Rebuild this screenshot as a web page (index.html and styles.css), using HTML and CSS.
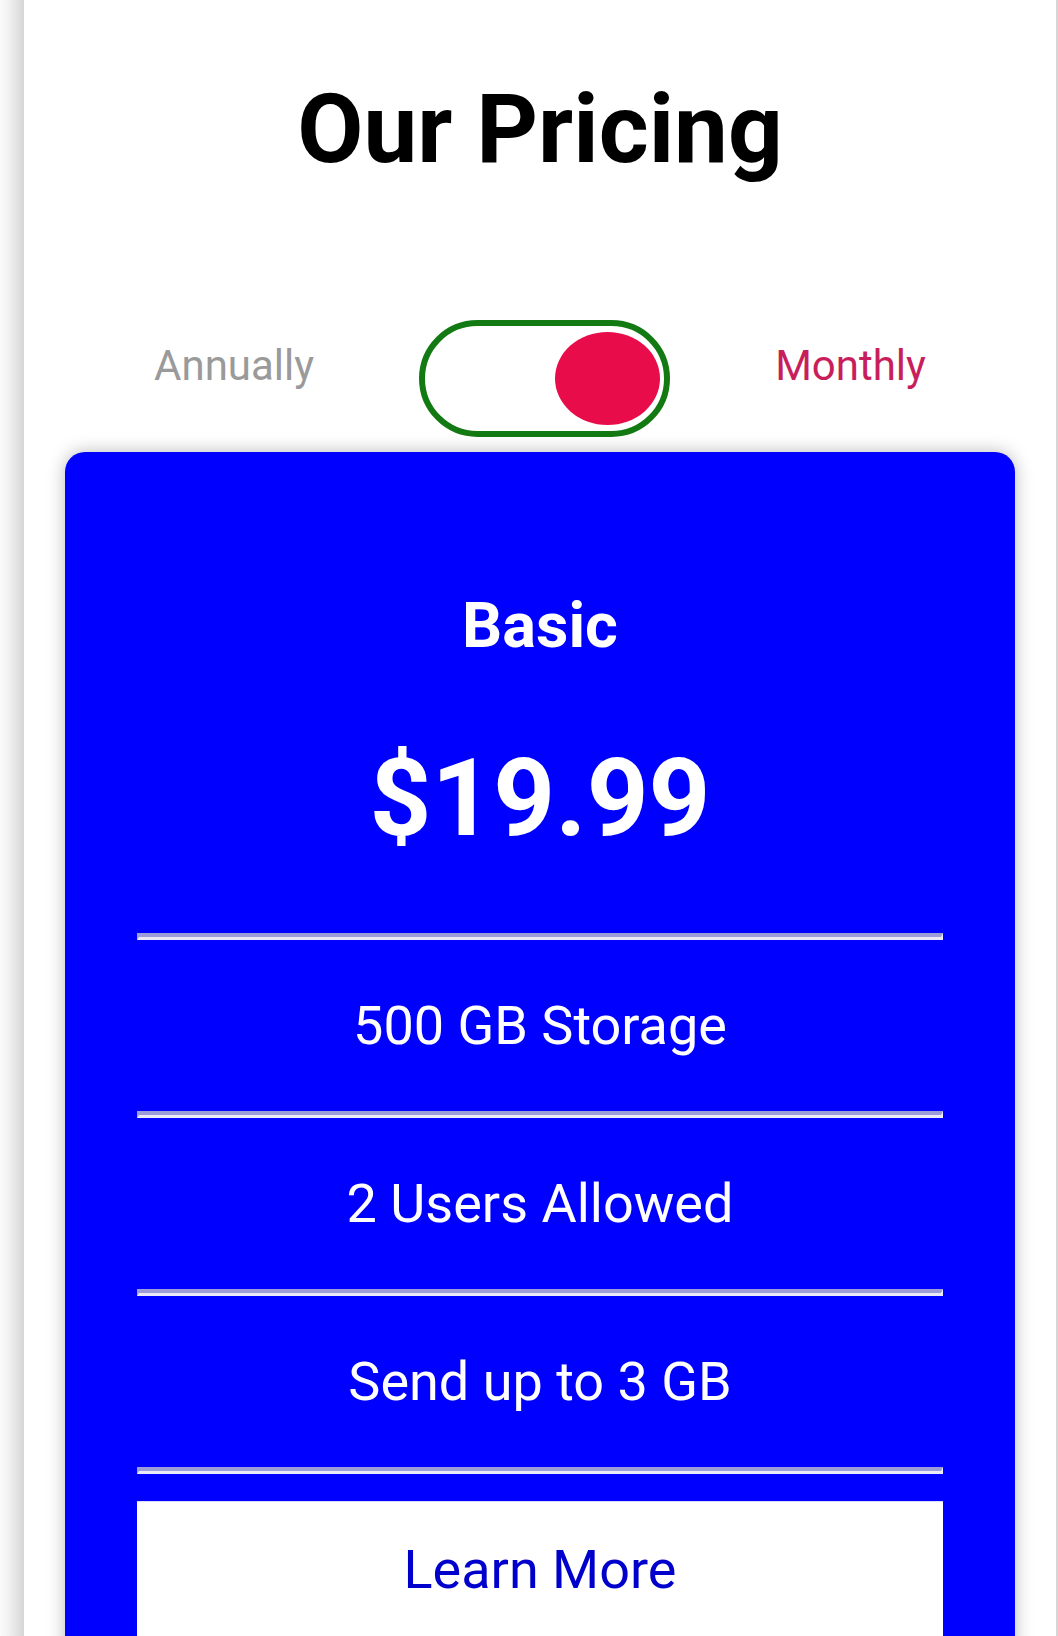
FILE: index.html
```html
<!DOCTYPE html>
<html lang="en">
<head>
<meta charset="utf-8">
<title>Our Pricing</title>
<link rel="stylesheet" href="styles.css">
</head>
<body>
<div class="frame">
  <div class="edge-left"></div>
  <main class="page">
    <h1 class="title">Our Pricing</h1>
    <div class="switch-row">
      <span class="label label-annual">Annually</span>
      <div class="toggle"><span class="knob"></span></div>
      <span class="label label-monthly">Monthly</span>
    </div>
    <section class="card">
      <h2 class="plan">Basic</h2>
      <div class="price">$19.99</div>
      <hr class="rule">
      <div class="feature">500 GB Storage</div>
      <hr class="rule">
      <div class="feature">2 Users Allowed</div>
      <hr class="rule">
      <div class="feature">Send up to 3 GB</div>
      <hr class="rule">
      <button class="btn">Learn More</button>
    </section>
  </main>
  <div class="edge-right"></div>
</div>
</body>
</html>
```

FILE: styles.css
```css
html, body {
  margin: 0;
  padding: 0;
  background: #ffffff;
}

body {
  font-family: Roboto, "Liberation Sans", sans-serif;
  overflow: hidden;
}

.frame {
  display: flex;
  min-height: 1800px;
}

.edge-left {
  width: 24px;
  flex: none;
  background: linear-gradient(to right, #fbfbfb, #f0f0f0 40%, #d6d6d6);
}

.edge-right {
  width: 2px;
  flex: none;
  background: #d6d6d6;
}

.page {
  flex: 1;
  display: flex;
  flex-direction: column;
  align-items: center;
}

.title {
  margin: 81px 0 0;
  font-size: 96px;
  line-height: 96px;
  font-weight: 700;
  color: #000;
}

.switch-row {
  margin-top: 143px;
  display: flex;
  align-items: flex-start;
  justify-content: center;
  gap: 105px;
}

.label {
  margin-top: 21px;
  font-size: 42px;
  line-height: 49px;
}

.label-annual {
  color: #9a9a9a;
}

.label-monthly {
  color: #c81f5c;
}

.toggle {
  box-sizing: border-box;
  width: 251px;
  height: 117px;
  border: 6px solid #137a13;
  border-radius: 59px;
  background: #fff;
  display: flex;
  align-items: center;
  justify-content: flex-end;
  padding-right: 4px;
}

.knob {
  display: block;
  width: 105px;
  height: 93px;
  border-radius: 50%;
  background: #e80c4a;
}

.card {
  box-sizing: border-box;
  margin-top: 15px;
  width: 950px;
  background: #0000ff;
  border-radius: 20px;
  padding: 142px 72px 120px;
  box-shadow: 0 0 18px rgba(0, 0, 0, 0.28);
  display: flex;
  flex-direction: column;
  align-items: stretch;
  color: #fff;
}

.plan {
  margin: 0;
  text-align: center;
  font-size: 63px;
  line-height: 63px;
  font-weight: 700;
}

.price {
  margin-top: 87px;
  text-align: center;
  font-size: 108px;
  line-height: 108px;
  font-weight: 700;
}

.rule {
  margin: 81px 0 0;
  height: 0;
  border-style: solid;
  border-width: 4px 2px 3px 2px;
  border-color: #9c9cd8 #e9e9f7 #e9e9f7 #9c9cd8;
}

.feature + .rule {
  margin-top: 0;
}

.feature {
  height: 171px;
  display: flex;
  align-items: center;
  justify-content: center;
  font-size: 54px;
  line-height: 54px;
}

.btn {
  margin-top: 27px;
  height: 136px;
  border: none;
  border-top: 1px solid #d8d8ff;
  background: #fff;
  color: #0000cc;
  font-family: Roboto, "Liberation Sans", sans-serif;
  font-size: 54px;
  padding: 0;
  cursor: pointer;
}
```
